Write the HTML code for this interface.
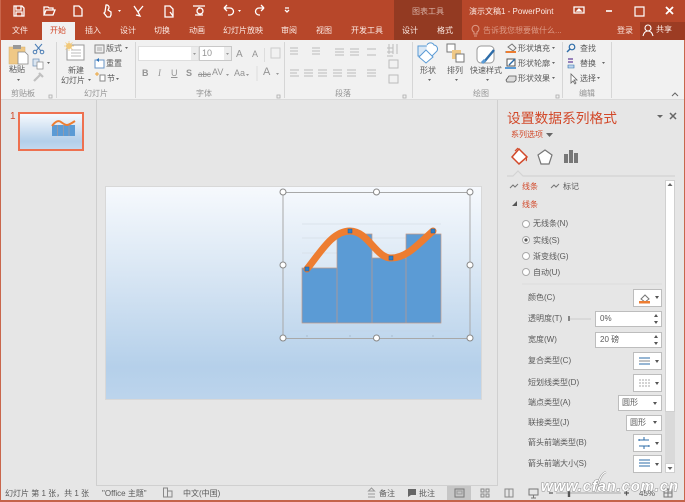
<!DOCTYPE html>
<html><head><meta charset="utf-8"><style>
html,body{margin:0;padding:0;width:685px;height:502px;overflow:hidden;background:#e6e6e6}
#r{position:absolute;left:0;top:0;width:685px;height:502px;overflow:hidden;filter:blur(.35px);font-family:"Liberation Sans","Noto Sans CJK SC",sans-serif;font-size:8px;color:#555}
.a{position:absolute}
.t{position:absolute;white-space:nowrap;line-height:11px;font-size:8px}
.w{color:#fbe9e3}
.g{color:#5a5a5a}
.l{color:#949494}
.o{color:#d2492a}
.box{position:absolute;background:#fff;border:1px solid #bdbdbd;box-sizing:border-box}
svg{position:absolute;left:0;top:0}
</style></head><body><div id="r">
<div class="a" style="left:0;top:0;width:685px;height:40px;background:#b7472a"></div>
<div class="a" style="left:394px;top:0;width:68px;height:40px;background:#933a22"></div>
<div class="a" style="left:640px;top:22px;width:45px;height:18px;background:#9c3c23"></div>
<div class="a" style="left:42px;top:22px;width:33px;height:18px;background:#f1f1f1"></div>
<div class="a" style="left:0;top:40px;width:685px;height:60px;background:#f1f1f1;border-bottom:1px solid #dadada;box-sizing:border-box"></div>
<div class="a" style="left:0;top:0;width:1px;height:502px;background:#c9664c"></div>
<div class="a" style="left:684px;top:40px;width:1px;height:462px;background:#c9664c"></div>
<div class="a" style="left:0;top:500px;width:685px;height:2px;background:#c4634a"></div>

<span class="t w" style="left:412px;top:6px;color:#d7b1a6">图表工具</span>
<span class="t w" style="left:469px;top:6px">演示文稿1 - PowerPoint</span>
<span class="t w" style="left:12px;top:25px">文件</span>
<span class="t o" style="left:50px;top:25px">开始</span>
<span class="t w" style="left:85px;top:25px">插入</span>
<span class="t w" style="left:120px;top:25px">设计</span>
<span class="t w" style="left:154px;top:25px">切换</span>
<span class="t w" style="left:189px;top:25px">动画</span>
<span class="t w" style="left:223px;top:25px">幻灯片放映</span>
<span class="t w" style="left:281px;top:25px">审阅</span>
<span class="t w" style="left:316px;top:25px">视图</span>
<span class="t w" style="left:351px;top:25px">开发工具</span>
<span class="t w" style="left:402px;top:25px">设计</span>
<span class="t w" style="left:437px;top:25px">格式</span>
<span class="t" style="left:483px;top:25px;color:#dc9a86">告诉我您想要做什么...</span>
<span class="t w" style="left:617px;top:25px">登录</span>
<span class="t w" style="left:656px;top:24px">共享</span>

<!-- ribbon labels -->
<span class="t g" style="left:9px;top:64px">粘贴</span>
<span class="t g" style="left:106px;top:43px">版式</span>
<span class="t g" style="left:106px;top:58px">重置</span>
<span class="t g" style="left:107px;top:73px">节</span>
<span class="t g" style="left:68px;top:65px">新建</span>
<span class="t g" style="left:61px;top:75px">幻灯片</span>
<span class="t l" style="left:11px;top:88px">剪贴板</span>
<span class="t l" style="left:84px;top:88px">幻灯片</span>
<span class="t l" style="left:196px;top:88px">字体</span>
<span class="t l" style="left:335px;top:88px">段落</span>
<span class="t l" style="left:473px;top:88px">绘图</span>
<span class="t l" style="left:579px;top:88px">编辑</span>
<span class="t g" style="left:420px;top:65px">形状</span>
<span class="t g" style="left:447px;top:65px">排列</span>
<span class="t g" style="left:470px;top:65px">快速样式</span>
<span class="t g" style="left:518px;top:43px">形状填充</span>
<span class="t g" style="left:518px;top:58px">形状轮廓</span>
<span class="t g" style="left:518px;top:73px">形状效果</span>
<span class="t g" style="left:580px;top:43px">查找</span>
<span class="t g" style="left:580px;top:58px">替换</span>
<span class="t g" style="left:580px;top:73px">选择</span>
<div class="box" style="left:138px;top:46px;width:61px;height:15px;border-color:#dedede"></div>
<div class="box" style="left:199px;top:46px;width:33px;height:15px;border-color:#c8c8c8"></div>
<div class="a" style="left:191px;top:47px;width:7px;height:13px;background:#ececec"></div>
<div class="a" style="left:224px;top:47px;width:7px;height:13px;background:#ececec"></div>
<span class="t l" style="left:202px;top:48px;font-size:9px">10</span>
<span class="t l" style="left:236px;top:49px;font-size:10px">A</span>
<span class="t l" style="left:252px;top:49px;font-size:9px">A</span>
<span class="t l" style="left:142px;top:68px;font-size:9px;font-weight:bold">B</span>
<span class="t l" style="left:158px;top:68px;font-size:9px;font-style:italic;font-family:'Liberation Serif',serif">I</span>
<span class="t l" style="left:171px;top:68px;font-size:9px;text-decoration:underline">U</span>
<span class="t l" style="left:186px;top:68px;font-size:9px;font-weight:bold">S</span>
<span class="t l" style="left:198px;top:69px;text-decoration:line-through">abc</span>
<span class="t l" style="left:212px;top:67px;font-size:9px">AV</span>
<span class="t l" style="left:234px;top:68px;font-size:9px">Aa</span>
<span class="t l" style="left:263px;top:67px;font-size:11px">A</span>

<!-- main -->
<div class="a" style="left:96px;top:100px;width:1px;height:386px;background:#cfcfcf"></div>
<div class="a" style="left:97px;top:100px;width:401px;height:386px;background:#e6e6e6;border-right:1px solid #d0d0d0;border-bottom:1px solid #d0d0d0;box-sizing:border-box"></div>
<span class="t" style="left:10px;top:111px;color:#d2492a;font-size:10px">1</span>
<div class="a" style="left:18px;top:112px;width:66px;height:39px;box-sizing:border-box;border:2px solid #ee7150;background:linear-gradient(#f6f9fd,#b3cfea 78%,#c2d8ee)"></div>
<div class="a" style="left:106px;top:187px;width:375px;height:212px;background:linear-gradient(#f6f9fd 0%,#dde9f5 35%,#b5d0ea 85%,#bcd4ec 100%);box-shadow:0 0 0 1px #d8d8d8"></div>

<!-- status -->
<div class="a" style="left:1px;top:486px;width:683px;height:14px;background:#e6e6e6"></div>
<div class="a" style="left:447px;top:486px;width:24px;height:14px;background:#c6c6c6"></div>
<span class="t g" style="left:5px;top:488px">幻灯片 第 1 张，共 1 张</span>
<span class="t g" style="left:102px;top:488px">"Office 主题"</span>
<span class="t g" style="left:183px;top:488px">中文(中国)</span>
<span class="t g" style="left:379px;top:488px">备注</span>
<span class="t g" style="left:419px;top:488px">批注</span>
<span class="t g" style="left:639px;top:488px">45%</span>

<!-- pane -->
<span class="t o" style="left:507px;top:110px;font-size:13.75px;line-height:17px">设置数据系列格式</span>
<span class="t o" style="left:511px;top:129px">系列选项</span>
<span class="t o" style="left:522px;top:181px">线条</span>
<span class="t g" style="left:563px;top:181px">标记</span>
<span class="t o" style="left:522px;top:199px">线条</span>
<span class="t g" style="left:533px;top:218px">无线条(N)</span>
<span class="t g" style="left:533px;top:235px">实线(S)</span>
<span class="t g" style="left:533px;top:251px">渐变线(G)</span>
<span class="t g" style="left:533px;top:267px">自动(U)</span>
<span class="t g" style="left:528px;top:292px">颜色(C)</span>
<span class="t g" style="left:528px;top:313px">透明度(T)</span>
<span class="t g" style="left:528px;top:334px">宽度(W)</span>
<span class="t g" style="left:528px;top:355px">复合类型(C)</span>
<span class="t g" style="left:528px;top:377px">短划线类型(D)</span>
<span class="t g" style="left:528px;top:397px">端点类型(A)</span>
<span class="t g" style="left:528px;top:417px">联接类型(J)</span>
<span class="t g" style="left:528px;top:437px">箭头前端类型(B)</span>
<span class="t g" style="left:528px;top:458px">箭头前端大小(S)</span>

<div class="a" style="left:665px;top:180px;width:10px;height:293px;background:#d9d9d9"></div>
<div class="a" style="left:665px;top:180px;width:10px;height:232px;background:#fff;border:1px solid #d0d0d0;box-sizing:border-box"></div>
<div class="box" style="left:665px;top:463px;width:10px;height:10px;border-color:#d0d0d0"></div>
<div class="box" style="left:633px;top:289px;width:29px;height:18px"></div>
<div class="box" style="left:595px;top:311px;width:67px;height:16px"></div>
<div class="box" style="left:595px;top:332px;width:67px;height:16px"></div>
<div class="box" style="left:633px;top:352px;width:29px;height:18px"></div>
<div class="box" style="left:633px;top:374px;width:29px;height:18px"></div>
<div class="box" style="left:618px;top:395px;width:44px;height:16px"></div>
<div class="box" style="left:626px;top:415px;width:36px;height:16px"></div>
<div class="box" style="left:633px;top:434px;width:29px;height:18px"></div>
<div class="box" style="left:633px;top:455px;width:29px;height:18px"></div>
<span class="t g" style="left:600px;top:313px">0%</span>
<span class="t g" style="left:600px;top:334px">20 磅</span>
<span class="t g" style="left:622px;top:397px">圆形</span>
<span class="t g" style="left:630px;top:417px">圆形</span>

<svg width="685" height="502" viewBox="0 0 685 502" fill="none">
<!-- title bar icons -->
<g stroke="#fff" stroke-width="1.3" fill="none">
<path d="M14 6h8l2 2v8H14z M16 6v4h5V6 M16 16v-4h6v4"/>
<path d="M44 15V7h4l1 1h4v2 M44 15l2-5h9l-2 5z"/>
<path d="M74 6h5l3 3v7h-8z"/>
<path d="M106 5a2.500 2.500 0 0 1 3 3l-1 2 3 2v3l-1 2h-3l-3-4 1-1z"/>
<path d="M134 6l4 6 5-6M138 12l2 4-4-1"/>
<path d="M165 6h5l3 3v8h-8z M170 12l3 4"/>
<path d="M193 6h12M195 15h8M199 7v2"/><circle cx="200" cy="11" r="3"/>
<path d="M224 8h6a3.500 3.500 0 0 1 0 7h-2M224 8l3-3M224 8l3 3"/>
<path d="M264 8h-5a3.500 3.500 0 0 0 0 7h1M264 8l-3-3M264 8l-3 3"/>
<path d="M285 8h4M285 10l2 2 2-2"/>
<path d="M574 7h10v6h-10z"/><path d="M579 9l-2 2h4z" fill="#fff"/>
<path d="M606 11h6" stroke-width="1.600"/><path d="M635 7h9v9h-9zM635 7h9" stroke-width="1.200"/>
<path d="M666 7l7 7M673 7l-7 7" stroke-width="1.800"/>
</g>
<path d="M238 10h3l-1.500 2zM118 10h3l-1.500 2z" fill="#fff"/>
<path d="M477 34v-2a3.500 3.500 0 1 0-3 0v2zM474 36h3" stroke="#dc9a86"/>
<circle cx="648" cy="28" r="3" stroke="#fff" stroke-width="1.100"/><path d="M643 36c1-4 3-5 5-5s4 1 5 5" stroke="#fff" stroke-width="1.100"/>

<!-- ribbon separators -->
<path d="M56.500 42v56M135.500 42v56M284.500 42v56M412.500 42v56M562.500 42v56M611.500 42v56" stroke="#d6d6d6"/>
<!-- clipboard -->
<rect x="9" y="47" width="16" height="17" fill="#efc886" stroke="#d8b06a" stroke-width=".5"/>
<rect x="13" y="45" width="8" height="4" fill="#999"/>
<path d="M18 52h7l3 3v9H18z" fill="#fff" stroke="#888" stroke-width=".8"/>
<g stroke="#4a7db5" stroke-width="1"><path d="M35 44l6 7M42 44l-6 7"/><circle cx="35" cy="52" r="1.800"/><circle cx="42" cy="52" r="1.800"/></g>
<rect x="33" y="59" width="6" height="7" fill="#dbe6f2" stroke="#6e8fb5" stroke-width=".7"/><rect x="37" y="62" width="6" height="7" fill="#fff" stroke="#888" stroke-width=".7"/>
<path d="M34 81l6-6M39 73l4 4" stroke="#c0c0c0" stroke-width="2.200"/>
<path d="M47 62h3l-1.500 2zM17 79h3l-1.500 2zM88 79h3l-1.500 2z" fill="#666"/>
<!-- new slide -->
<rect x="67" y="45" width="17" height="15" fill="#fff" stroke="#999"/><path d="M71 50h10M71 53h10M71 56h10" stroke="#bbb"/>
<circle cx="69" cy="46" r="3" fill="#f1c878"/><path d="M69 41v10M64 46h10M65.500 42.500l7 7M72.500 42.500l-7 7" stroke="#f1c878" stroke-width=".7"/>
<rect x="95" y="45" width="9" height="8" fill="#eee" stroke="#888"/><path d="M97 48h5M97 50h5" stroke="#aaa"/>
<rect x="95" y="60" width="9" height="8" fill="#fff" stroke="#6a96c6"/><path d="M96 60l3-2v4z" fill="#2d72b8"/>
<path d="M95 74h4M97 72v4" stroke="#eaa43a"/><rect x="100" y="75" width="5" height="6" fill="#fff" stroke="#888"/>
<path d="M125 47h3l-1.500 2zM116 78h3l-1.500 2z" fill="#666"/>
<!-- font ghost -->
<path d="M193 53h3l-1.500 2zM226 53h3l-1.500 2zM226 74h3l-1.500 2zM246 74h3l-1.500 2zM276 73h3l-1.500 2z" fill="#999"/>
<path d="M264.500 48v14M257 66v15" stroke="#ddd"/>
<rect x="271" y="48" width="9" height="10" fill="none" stroke="#ccc"/>
<!-- para ghost -->
<g stroke="#bcbcbc">
<path d="M290 48h8M290 51h8M290 54h8M312 48h8M312 51h8M312 54h8M335 49h9M335 52h9M335 55h9M350 49h9M350 52h9M350 55h9M367 49h9M367 55h9M387 48h6M387 52h6M387 56h6"/>
<path d="M290 70h9M290 73h7M290 76h9M304 70h9M304 73h9M304 76h9M318 70h9M318 73h9M318 76h9M333 70h9M333 73h9M333 76h9M347 70h9M347 73h9M347 76h9M367 70h9M367 73h9M367 76h9"/>
<path d="M389 44v10M393 44v10M397 44v10M389 60h9v8h-9zM389 75h9v8h-9z"/>
</g>
<!-- drawing -->
<path d="M418 46h11v10h-11z" fill="#dbe8f5" stroke="#5b9bd5"/>
<path d="M427 45a4 4 0 0 1 7 0 4 4 0 0 1 3 6l-6 6-5-5" fill="#fff" stroke="#5b9bd5"/>
<path d="M426 50l7 7-7 6-7-6z" fill="#fff" stroke="#5b9bd5"/>
<rect x="447" y="44" width="8" height="8" fill="#fff" stroke="#777"/><rect x="452" y="50" width="9" height="9" fill="#efc886"/><rect x="456" y="54" width="8" height="8" fill="#fff" stroke="#777"/>
<rect x="477" y="46" width="17" height="17" rx="4" fill="#fff" stroke="#999"/><path d="M484 62l10-12" stroke="#2d6ca8" stroke-width="2.400"/><path d="M482 63l3-3" stroke="#5b9bd5" stroke-width="3"/>
<path d="M428 79h3l-1.500 2zM455 79h3l-1.500 2zM486 79h3l-1.500 2zM552 47h3l-1.500 2zM552 62h3l-1.500 2zM552 77h3l-1.500 2zM602 62h3l-1.500 2zM597 77h3l-1.500 2z" fill="#666"/>
<path d="M508 47l4-3 4 4-3 3zM505 52h10" stroke="#777"/><rect x="506" y="51" width="10" height="2" fill="#ed7d31"/>
<rect x="507" y="59" width="8" height="7" fill="#fff" stroke="#555"/><path d="M509 65l6-6" stroke="#2d6ca8" stroke-width="1.400"/><rect x="505" y="67" width="11" height="2" fill="#5b9bd5"/>
<path d="M506 80l3-4h7v4l-2 2h-7z" fill="#ddd" stroke="#555" stroke-width=".8"/>
<circle cx="572" cy="47" r="2.800" stroke="#2d6ca8" stroke-width="1.200"/><path d="M570 49l-3 3" stroke="#2d6ca8" stroke-width="1.400"/>
<path d="M568 59h5M568 62h5" stroke="#7a5ca8" stroke-width="1.500"/><path d="M568 65h6v3h-6z" fill="#bcd4ec" stroke="#2d6ca8" stroke-width=".6"/>
<path d="M571 74v9l2-2 2 3 1-1-2-3h3z" fill="#fff" stroke="#666" stroke-width=".8"/>
<path d="M672 96l3-3 3 3" stroke="#666"/>
<g stroke="#aaa" stroke-width=".8"><path d="M49 95h3v3h-3zM277 95h3v3h-3zM403 95h3v3h-3zM556 95h3v3h-3z"/></g>
<!-- thumb chart -->
<path d="M52 125h23v11H52z" fill="#5b9bd5"/><path d="M57.500 125v11M63.500 125v11M69 125v11" stroke="#c59a86" stroke-width=".5"/>
<path d="M52 126q5-7 9-4t6 3 8-4" stroke="#ed7d31" stroke-width="2"/>
<!-- chart -->
<path d="M302 224h139M302 238h139M302 253h139" stroke="#d5dde6" stroke-width=".7"/>
<path d="M290 331h165" stroke="#c2d4e7" stroke-width=".7"/>
<path d="M302 268h35v55h-35zM337 234h35v89h-35zM372 258h34v65h-34zM406 234h35v89h-35z" fill="#5b9bd5" stroke="#c49a85" stroke-width=".7"/>
<path d="M307 269C322 250 333 231 350 231C368 231 376 258 391 258C407 258 418 244 433 231" stroke="#ed7d31" stroke-width="7" stroke-linecap="round"/>
<g fill="#2f7fc6" stroke="#1a5ea0" stroke-width=".5"><rect x="305" y="267" width="4" height="4"/><rect x="348" y="229" width="4" height="4"/><rect x="389" y="256" width="4" height="4"/><rect x="431" y="229" width="4" height="4"/></g>
<rect x="283" y="192.500" width="187" height="146" stroke="#a8a8a8" stroke-width="1"/>
<g fill="#fff" stroke="#888"><circle cx="283" cy="192" r="3"/><circle cx="376.500" cy="192" r="3"/><circle cx="470" cy="192" r="3"/><circle cx="283" cy="265" r="3"/><circle cx="470" cy="265" r="3"/><circle cx="283" cy="338" r="3"/><circle cx="376.500" cy="338" r="3"/><circle cx="470" cy="338" r="3"/></g>
<path d="M307 335v2M350 335v2M392 335v2M433 335v2" stroke="#a9bcd0"/>
<!-- pane icons -->
<path d="M657 115h6l-3 3z" fill="#666"/><path d="M670 113l6 6M676 113l-6 6" stroke="#666" stroke-width="1.500"/>
<path d="M546 133h7l-3.500 4z" fill="#666"/>
<path d="M519 149l8 8-8 7-7-7z" fill="#fff" stroke="#d2492a" stroke-width="1.500"/><path d="M515 151l3-3M526 157q1 3 0 4" stroke="#d2492a" stroke-width="1.200"/>
<path d="M545 150l7 5-2 6-1 3h-8l-1-3-2-6z" fill="#fff" stroke="#777" stroke-width="1.200"/>
<path d="M564 154h4v9h-4zM569 150h4v13h-4zM574 153h4v10h-4z" fill="#777"/>
<path d="M507 176h6l5-5 5 5h152" stroke="#d4d4d4" fill="#e6e6e6" stroke-width="1.200"/>
<path d="M510 188l3-3 2 2 3-3M551 188l3-3 2 2 3-3" stroke="#777"/>
<path d="M512 206h5v-5z" fill="#555"/>
<g fill="#fff" stroke="#aaa"><circle cx="526" cy="224" r="3.500"/><circle cx="526" cy="240" r="3.500"/><circle cx="526" cy="256" r="3.500"/><circle cx="526" cy="272" r="3.500"/></g>
<circle cx="526" cy="240" r="1.600" fill="#555"/>
<path d="M522 284h140" stroke="#dcdcdc"/>
<path d="M667.500 186l2.500-3 2.500 3zM667.500 467l2.500 3 2.500-3z" fill="#666"/>
<path d="M641 299l4-4 4 4-4 3zM639 303h10" stroke="#777"/><rect x="639" y="301" width="11" height="2.500" fill="#ed7d31"/>
<path d="M569 316v5" stroke="#666" stroke-width="1.500"/><path d="M570 319h21" stroke="#ccc"/>
<path d="M654 317l2-3 2 3zM654 321l2 3 2-3zM654 338l2-3 2 3zM654 342l2 3 2-3z" fill="#555"/>
<path d="M655 296h4l-2 3zM655 360h4l-2 3zM655 382h4l-2 3zM653 402h4l-2 3zM653 421h4l-2 3zM655 442h4l-2 3zM655 463h4l-2 3z" fill="#555"/>
<path d="M639 358h11M639 364h11" stroke="#2d6ca8"/><path d="M639 361h11" stroke="#888"/>
<path d="M639 380h11M639 383h11M639 386h11" stroke="#aaa" stroke-dasharray="2 1"/>
<path d="M639 440h10M639 446h10" stroke="#2d6ca8"/><path d="M644 437v3M644 446v3M639 439v2M649 445v2" stroke="#2d6ca8"/>
<path d="M639 460h11M639 463h11M639 466h11" stroke="#2d6ca8"/>
<!-- status icons -->
<path d="M163.500 488h4v9h-4zM168 491h4v6h-4" stroke="#888"/>
<path d="M368 494h7M368 497h7M371.500 488l-3 3h6z" stroke="#999"/>
<path d="M408 489h8v6h-5l-3 2z" fill="#666"/>
<rect x="455" y="489" width="9" height="8" stroke="#777"/><rect x="457" y="491" width="5" height="3" stroke="#999"/>
<path d="M481 489h3v3h-3zM486 489h3v3h-3zM481 494h3v3h-3zM486 494h3v3h-3z" stroke="#888"/>
<path d="M505 489h4v8h-4zM509 489h4v8h-4z" stroke="#888"/>
<path d="M529 489h9v6h-9zM533.500 495v3M531 498h5" stroke="#777"/>
<path d="M549 493h4" stroke="#555" stroke-width="1.200"/><path d="M556 493h65" stroke="#aaa"/><path d="M569 489v8" stroke="#555" stroke-width="2.400"/>
<path d="M624 493h5M626.500 490.500v5" stroke="#555" stroke-width="1.200"/>
<rect x="664" y="489" width="8" height="8" stroke="#777"/><path d="M668 489v8M664 493h8" stroke="#777"/>
<path d="M595 492C598 484 600 474 606 472" stroke="#9a9a9a" stroke-width="2.200"/><path d="M595 492C598 484 600 474 606 472" stroke="#fff" stroke-width="1"/>
<text x="541" y="491" font-family="Liberation Sans, sans-serif" font-style="italic" font-weight="bold" font-size="15" fill="#fff" stroke="#8f8f8f" stroke-width="1" style="paint-order:stroke" textLength="137">www.cfan.com.cn</text>
</svg>
</div></body></html>
